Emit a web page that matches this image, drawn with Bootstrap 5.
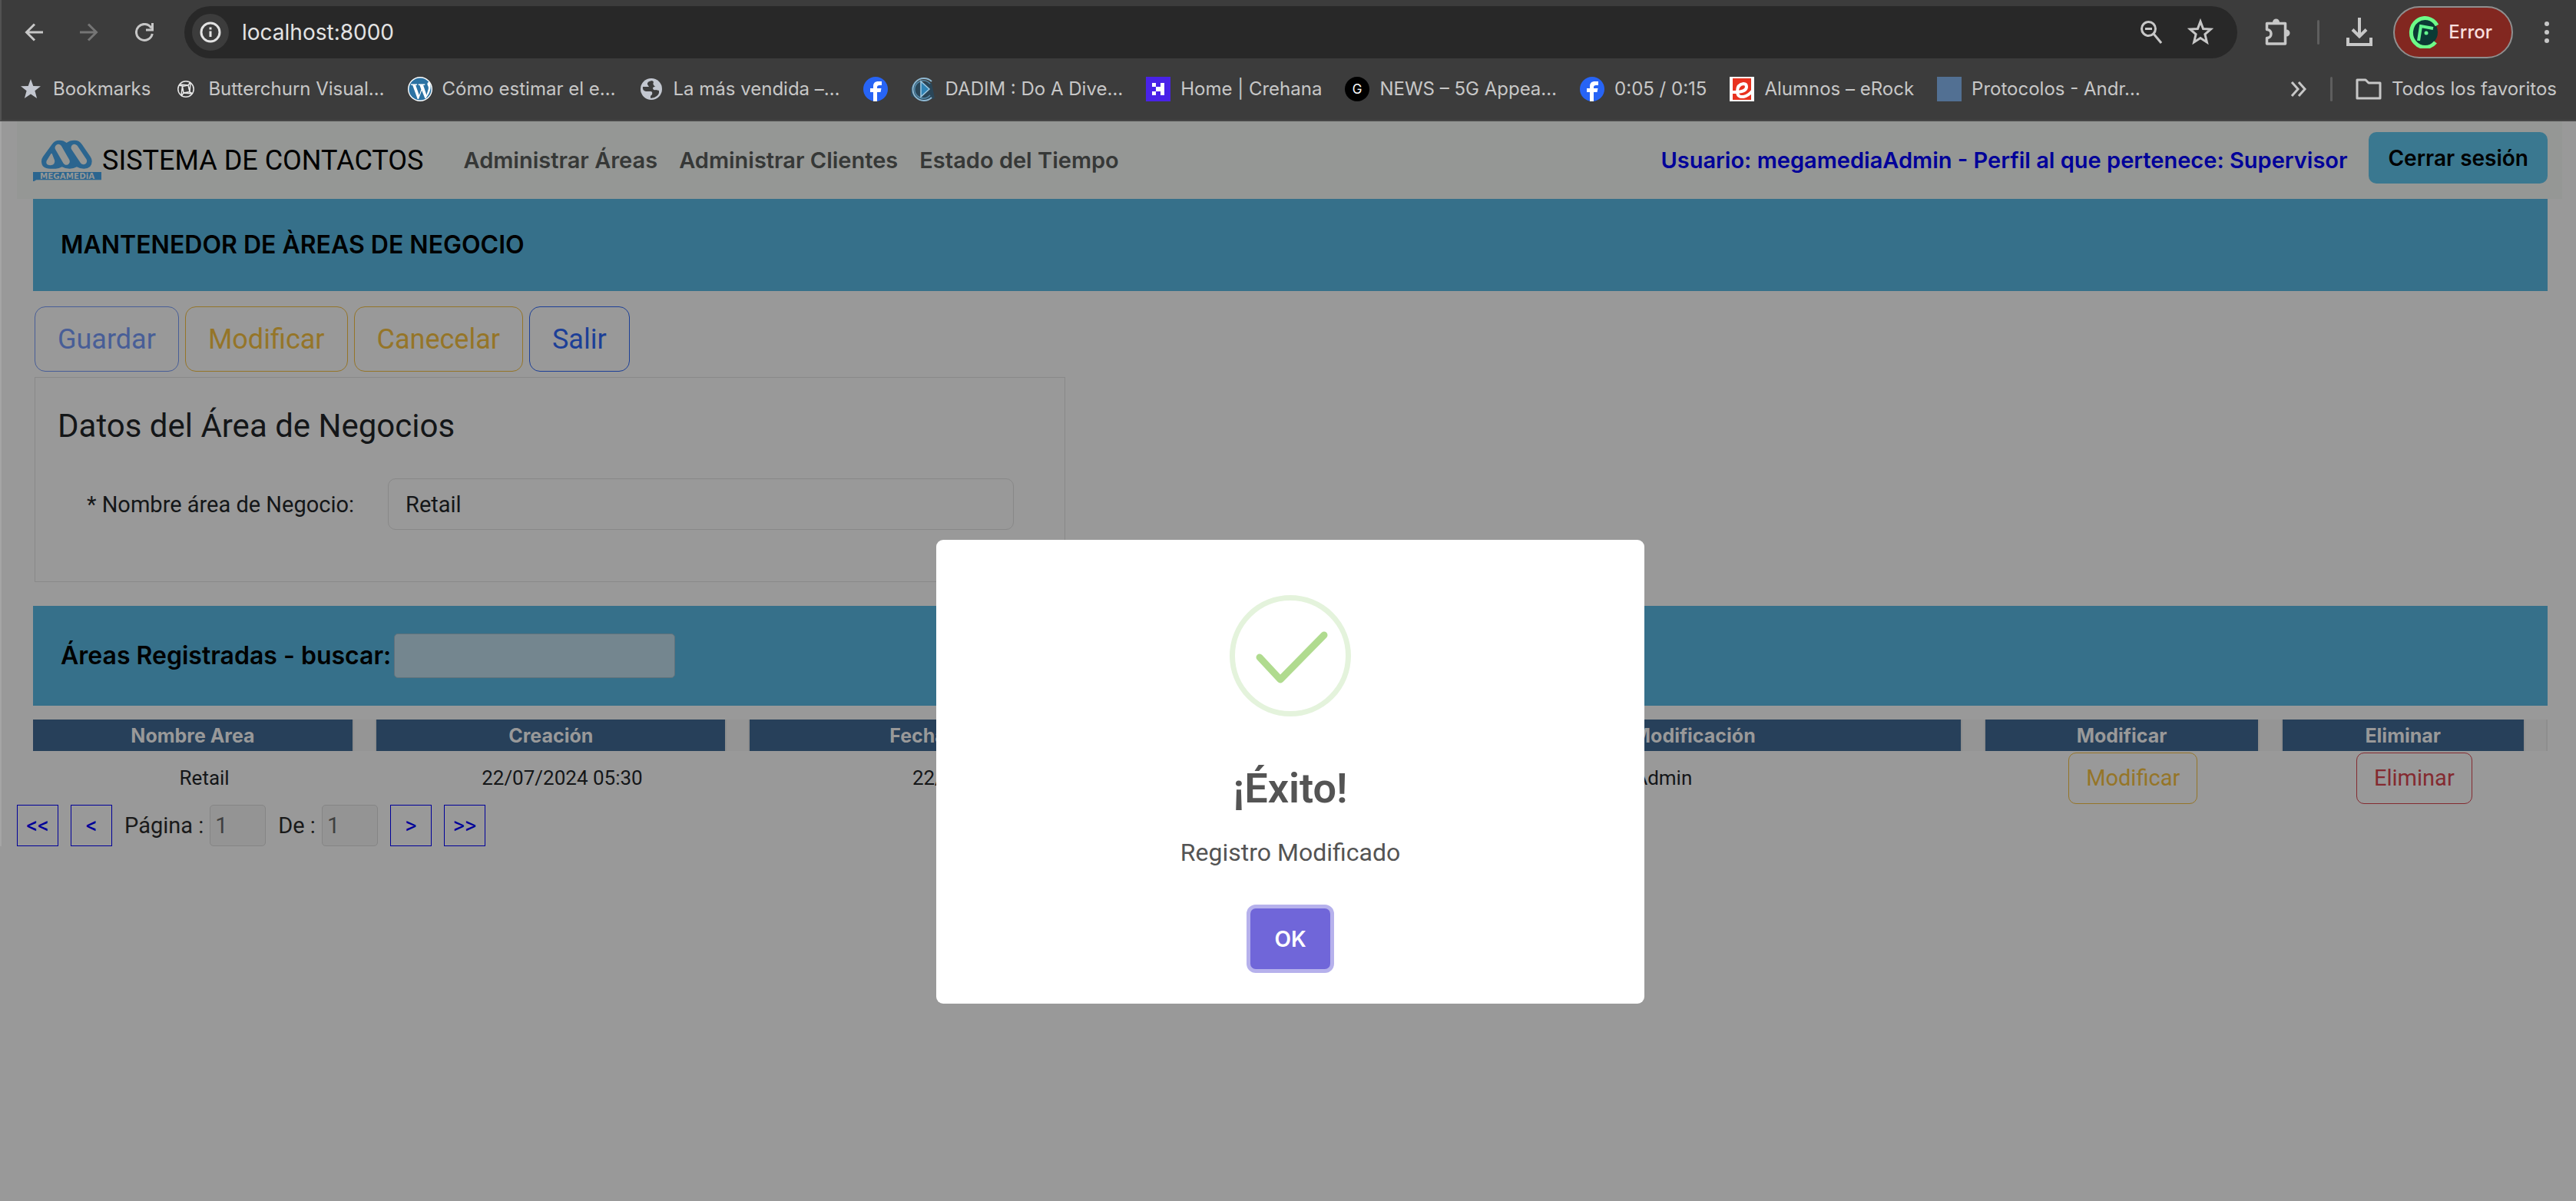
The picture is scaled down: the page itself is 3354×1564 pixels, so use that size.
<!DOCTYPE html>
<html lang="es">
<head>
<meta charset="utf-8">
<meta name="viewport" content="width=device-width, initial-scale=1">
<title>Sistema de Contactos</title>
<link href="https://cdn.jsdelivr.net/npm/bootstrap@5.3.0/dist/css/bootstrap.min.css" rel="stylesheet">
<style>
  html, body { height: 100%; }
  body { background: #999; color: #141618; font-family: Roboto, "Liberation Sans", sans-serif; font-size: 29px; line-height: 40px; }
  svg { flex: none; display: block; }

  /* browser chrome */
  .chrome-top { background: #3c3c3c; border-left: 2px solid #525252; border-bottom: 2px solid #474747; color: #c7c7c7; font-family: Inter, Roboto, sans-serif; font-size: 24px; line-height: 32px; }
  .tool-row { padding: 8px 2px 0 6px; height: 76px; }
  .tool-btn { width: 72px; height: 68px; padding: 0; border: 0; background: none; color: #c7c7c7; display: flex; align-items: center; justify-content: center; }
  .tool-btn.is-off { color: #757575; }
  .tool-btn.is-inner { width: 64px; }
  .address { background: #282828; border-radius: 34px; height: 68px; margin-left: 16px; padding: 0 16px 0 10px; }
  .site-info { width: 48px; height: 48px; border: 0; padding: 0; border-radius: 50%; background: #3c3c3c; color: #e3e3e3; display: flex; align-items: center; justify-content: center; }
  .address-text { background: none; border: 0; outline: 0; color: #e3e3e3; font-size: 28px; margin-left: 17px; padding: 0; }
  .vbar { width: 3px; height: 32px; border-radius: 2px; background: #5e5e5e; flex: none; }
  .profile { height: 68px; border-radius: 34px; border: 2px solid #8f8f8f; background: #822720; color: #f9dedc; font-weight: 500; padding: 0 25px 0 18px; gap: 12px; }
  .book-row { padding: 20px 25px 20px 22px; height: 80px; gap: 30px; }
  .book-row a { display: flex; align-items: center; gap: 13px; color: inherit; text-decoration: none; white-space: nowrap; }

  /* page */
  .page-area { border-left: 2px solid #a5a5a5; padding: 0 18px 0 20px; }
  .site-nav { background: #959795; height: 101px; padding: 0 19px 0 21px; font-family: Inter, Roboto, sans-serif; font-weight: 600; }
  .site-nav .navbar-brand { font: 400 36px/48px Roboto, sans-serif; color: #000; margin: 0 52px 0 0; padding: 0; gap: 1px; }
  .site-nav .nav-link { color: #363837; padding: 0; }
  .user-text { color: #000099; }
  .btn-logout { background: #3a7890; color: #000; font-size: 28px; font-weight: 600; border-radius: 10px; height: 67px; padding: 0 24px; margin: 0 0 6px 28px; }
  .main-area { padding: 0 19px 0 21px; }
  .banner { background: #36708a; color: #000; font: 600 32px/40px Inter, Roboto, sans-serif; padding: 0 36px; margin: 0; display: flex; align-items: center; }
  .banner-title { height: 120px; }
  .banner-search { height: 130px; margin-top: 31px; gap: 4px; }
  .banner-search input { width: 366px; height: 58px; border: 1px solid #60727c; border-radius: 5px; background: #74868f; padding: 0 12px; outline: 0; }

  .act-row { gap: 8px; margin: 20px 0 0 2px; }
  .btn-act { height: 85px; font-size: 36px; line-height: 48px; padding: 0 29px; border: 1px solid currentColor; border-radius: 14px; background: none; }
  .btn-act, .btn-row { color: var(--tone); --bs-btn-disabled-color: var(--tone); --bs-btn-disabled-border-color: var(--tone); --bs-btn-disabled-opacity: 1; }
  .btn-row { height: 67px; font-size: 29px; line-height: 40px; padding: 0 22px; border: 1px solid currentColor; border-radius: 10px; background: none; }
  .tone-soft { --tone: #485e97; }
  .tone-blue { --tone: #1c3f97; }
  .tone-gold { --tone: #957528; }
  .tone-red { --tone: #842a30; }

  .data-box { width: 41%; margin: 7px 0 0 2px; padding: 37px 66px 67px 29px; border: 1px solid #898989; }
  .data-box h2 { font-size: 42px; line-height: 52px; font-weight: 400; margin: 0; }
  .field-row { margin-top: 42px; padding-left: 38px; gap: 44px; }
  .field-row input { height: 67px; border: 1px solid #888; border-radius: 10px; background: none; color: inherit; padding: 0 22px; outline: 0; }

  .grid-areas { width: 100%; table-layout: fixed; margin-top: 18px; text-align: center; font-size: 26px; line-height: 34px; }
  .grid-areas th { background: #27405a; color: #999; height: 41px; padding: 0; font: 700 25px/34px Inter, Roboto, sans-serif; }
  .grid-areas th.gutter { background: #959595; border-left: 2px solid #8e8e8e; border-right: 2px solid #8e8e8e; }
  .grid-areas td { height: 70px; padding: 0; vertical-align: middle; }
  .c-gap { width: 29px; } .c-name { width: 12.74%; } .c-made { width: 13.93%; } .c-date { width: 18.54%; } .c-user { width: 28.83%; } .c-edit { width: 10.93%; } .c-drop { width: 9.65%; }

  .pager { color: #1a1a1a; gap: 16px; }
  .pager-btn { width: 54px; height: 54px; border: 1px solid #000099; background: none; color: #000099; padding: 0; }
  .pager label { display: flex; align-items: center; gap: 8px; }
  .pager input { width: 73px; height: 54px; border: 1px solid #858585; border-radius: 5px; background: #949494; color: #404040; padding: 0 6px; }

  /* alert over the page */
  .alert-layer { position: absolute; inset: 0; padding: 703px 0 0 6px; display: flex; justify-content: center; align-items: flex-start; }
  .alert-box { width: 922px; background: #fff; color: #545454; border-radius: 9px; padding: 72px 40px 45px; text-align: center; }
  .alert-box h1 { font-size: 54px; line-height: 70px; font-weight: 600; margin: 59px 0 0; }
  .alert-box p { font-size: 32px; line-height: 48px; margin: 24px 0 0; }
  .btn-ok, .btn-ok:hover { background: #7066d9; color: #fff; font: 600 28px/40px Inter, Roboto, sans-serif; width: 104px; height: 79px; border-radius: 7px; border: 0; margin-top: 49px; padding: 0; box-shadow: 0 0 0 5px #b6b1ec; }
</style>
</head>
<body class="position-relative overflow-hidden">

<header class="chrome-top">
  <div class="tool-row d-flex align-items-center">
    <button class="tool-btn" aria-label="Atrás"><svg width="24" height="24" viewBox="0 0 24 24" fill="none" stroke="currentColor" stroke-width="3"><path d="M24 12H2M13 1.500 2.500 12 13 22.500"/></svg></button>
    <button class="tool-btn is-off" aria-label="Adelante"><svg width="24" height="24" viewBox="0 0 24 24" fill="none" stroke="currentColor" stroke-width="3"><path d="M0 12h22M11 1.500 21.500 12 11 22.500"/></svg></button>
    <button class="tool-btn" aria-label="Recargar"><svg width="24" height="24" viewBox="0 0 24 24" fill="none" stroke="currentColor" stroke-width="3"><path d="M22.300 14A10.500 10.500 0 1 1 21 6.500M22.500 0v9h-8.500"/></svg></button>
    <div class="address d-flex align-items-center flex-grow-1">
      <button class="site-info" aria-label="Información del sitio"><svg width="28" height="28" viewBox="0 0 28 28" fill="none" stroke="currentColor" stroke-width="3"><circle cx="14" cy="14" r="12"/><path d="M14 12.500V20M14 7.500v3"/></svg></button>
      <input class="address-text flex-grow-1" aria-label="Dirección" value="localhost:8000">
      <button class="tool-btn is-inner" aria-label="Zoom"><svg width="28" height="32" viewBox="0 0 28 32" fill="none" stroke="currentColor" stroke-width="3"><circle cx="10.500" cy="11.500" r="9"/><path d="M6 11.500h9M17 18l10 12"/></svg></button>
      <button class="tool-btn is-inner" aria-label="Marcar"><svg width="34" height="36" viewBox="0 0 34 36" fill="none" stroke="currentColor" stroke-width="3"><path d="m17 4 3.600 9.500 9.900.6-7.600 6.500 2.500 10.400L17 25.500l-8.400 5.500 2.500-10.400L3.500 14.100l9.900-.6z"/></svg></button>
    </div>
    <button class="tool-btn mx-3" aria-label="Extensiones"><svg width="34" height="38" viewBox="0 0 34 38" fill="none" stroke="currentColor" stroke-width="3.500"><path d="M3.500 7.500h24V34h-24v-7.500a5.500 5.500 0 0 0 0-11z" stroke-linejoin="round"/><path d="M12 6a3.500 3.500 0 0 1 7 0zM29 16.500a3.500 3.500 0 0 1 0 7z" fill="currentColor" stroke-width="2"/></svg></button>
    <span class="vbar"></span>
    <button class="tool-btn ms-3" aria-label="Descargas"><svg width="34" height="38" viewBox="0 0 34 38" fill="none" stroke="currentColor" stroke-width="4"><path d="M17 0v24M8 15.500l9 9 9-9M2 26v9h30v-9"/></svg></button>
    <button class="profile d-flex align-items-center mx-2"><svg width="40" height="42" viewBox="0 0 40 42"><circle cx="20" cy="21" r="18" fill="#0b3a35"/><path d="M37 12A18 19 0 1 0 35 34" fill="none" stroke="#6dfb88" stroke-width="5"/><path d="M13 32 16 13l16 3" fill="none" stroke="#62f58e" stroke-width="4"/><circle cx="23" cy="22" r="2.500" fill="#62f58e"/></svg>Error</button>
    <button class="tool-btn" aria-label="Menú"><svg width="8" height="30" viewBox="0 0 8 30" fill="currentColor"><circle cx="4" cy="4" r="3"/><circle cx="4" cy="15" r="3"/><circle cx="4" cy="26" r="3"/></svg></button>
  </div>
  <nav class="book-row d-flex align-items-center" aria-label="Favoritos">
    <a href="#"><svg width="32" height="32" viewBox="0 0 32 32" fill="#c3c7d0"><path d="m16 3 3.300 9 9.700.3-7.600 6 2.700 9.700L16 22.400 7.900 28l2.700-9.700-7.600-6 9.700-.3z"/></svg>Bookmarks</a>
    <a href="#"><svg width="32" height="32" viewBox="0 0 32 32" fill="none" stroke="#e8e8e8" stroke-width="1.500"><circle cx="16" cy="16" r="10.200"/><path d="M11.500 12.500 19 11l2 8.500-8 1.500zM8 10l11 1 3-4M22 8l-1 12 4 2M24 22l-11-1-3 4M10 24l1.500-12L7 11"/></svg>Butterchurn Visual…</a>
    <a href="#"><svg width="32" height="32" viewBox="0 0 32 32"><circle cx="16" cy="16" r="16" fill="#fff"/><circle cx="16" cy="16" r="14.600" fill="#2b72a3"/><path d="M4 9.500h8v1.300l-1.800.3 4.600 13 2.600-7.600-2-5.400-1.700-.3V9.500h8.600v1.300l-2.200.3 4.300 12.700 2.300-7.800c1-3.500-1.700-4.800-1.200-7.300.4-1.800 2-2 3-1 2 4 1.500 8.500-1 14L23.500 28h-1.200l-4.100-10.200L14 29h-1.300L6.200 11.100 4 10.800z" fill="#fff"/></svg>Cómo estimar el e…</a>
    <a href="#"><svg width="32" height="32" viewBox="0 0 32 32"><circle cx="16" cy="16" r="14" fill="#c3c7d0"/><path d="M17 5q-7 1-6 5l2 3H5q-1 5 4 6h6q3 0 2 4l-2 2v3l5-1q7-3 6-9l-4-1q-4 1-4-3l4-2-1-4z" fill="#3c3c3c"/><path d="M20 4q-3 5 0 8l6 3 3-2Q26 6 20 4z" fill="#c3c7d0"/></svg>La más vendida –…</a>
    <a href="#" aria-label="Facebook"><svg width="32" height="32" viewBox="0 0 32 32"><circle cx="16" cy="16" r="16" fill="#2764f5"/><path d="M13 32V20H9v-5h4v-2.500C13 8 15.500 6 19.500 6H24v5h-3q-3 0-3 2.500V15h5.500l-1 5H18v12z" fill="#fff"/></svg></a>
    <a href="#"><svg width="32" height="32" viewBox="0 0 32 32" fill="none"><path d="M0 14 5 6l22 2 4 20-16 4L0 25z" fill="#2a4658"/><path d="M27 6A14.500 14.500 0 1 0 27 27" stroke="#8fb9d3" stroke-width="2"/><path d="M25 9A11.500 11.500 0 1 0 25 24" stroke="#5288a8" stroke-width="1.500"/><path d="M13 6v20l11-10z" fill="#2f83b5" stroke="#9cc8e2" stroke-width="1.500"/></svg>DADIM : Do A Dive…</a>
    <a href="#"><svg width="32" height="32" viewBox="0 0 32 32"><path fill="#4922e8" d="M0 0h32v32H0z"/><path d="M8 8h5v5H8zM8 19h5v5H8zM13 13h6V8h5v16h-5v-5h-6z" fill="#fff"/></svg>Home | Crehana</a>
    <a href="#"><svg width="32" height="32" viewBox="0 0 32 32"><circle cx="16" cy="16" r="16" fill="#000"/><text x="16" y="22" text-anchor="middle" font-family="Inter" font-size="17" fill="#fff">G</text></svg>NEWS – 5G Appea…</a>
    <a href="#"><svg width="32" height="32" viewBox="0 0 32 32"><circle cx="16" cy="16" r="16" fill="#2764f5"/><path d="M13 32V20H9v-5h4v-2.500C13 8 15.500 6 19.500 6H24v5h-3q-3 0-3 2.500V15h5.500l-1 5H18v12z" fill="#fff"/></svg>0:05 / 0:15</a>
    <a href="#"><svg width="32" height="32" viewBox="0 0 32 32"><path fill="#fff" d="M0 0h32v32H0z"/><path fill="#e8321f" d="M4 2h24v28H4z"/><path d="M2 20h8q12-1 12-7 0-4-4-4-8 1-8 10 0 8 8 7 6-1 12-8" fill="none" stroke="#fff" stroke-width="4"/></svg>Alumnos – eRock</a>
    <a href="#"><svg width="32" height="32" viewBox="0 0 32 32"><path fill="#527093" d="M0 0h32v32H0z"/></svg>Protocolos - Andr…</a>
    <a href="#" class="ms-auto" aria-label="Más favoritos"><svg width="22" height="20" viewBox="0 0 22 20" fill="none" stroke="currentColor" stroke-width="3"><path d="m2 1 8 9-8 9M11 1l8 9-8 9"/></svg></a>
    <span class="vbar"></span>
    <a href="#"><svg width="34" height="28" viewBox="0 0 34 28" fill="none" stroke="currentColor" stroke-width="3" stroke-linejoin="round"><path d="M2 2h11l4 4h15v20H2z"/></svg>Todos los favoritos</a>
  </nav>
</header>

<div class="page-area">
  <nav class="site-nav d-flex align-items-center">
    <a class="navbar-brand d-flex align-items-center" href="#">
      <svg width="89" height="54" viewBox="129 541 267 162" role="img" aria-label="Megamedia"><path d="M162 625q0-10 6-18l35-48q10-16 29-16 17 0 28 10 12-10 31-10 19 0 29 16l33 48q6 9 6 18 0 29-31 29-17 0-28-7-12 7-28 7-18 0-30-7-11 7-25 7-8 0-21 0-34 0-34-29z" fill="#2b658f"/><path d="M228 572l31 54M291 572l35 52" stroke="#959795" stroke-width="27" stroke-linecap="round"/><path d="M201 597l-17 28q-4 13 12 13 18 0 15-16z" fill="#959795" stroke="#959795" stroke-width="5" stroke-linejoin="round"/><path d="M129 667h267v31H142l-11 6h-2z" fill="#2b658f"/><text x="263" y="693" text-anchor="middle" font-family="DejaVu Sans" font-weight="700" font-size="31" fill="#959795">MEGAMEDiA</text></svg>
      SISTEMA DE CONTACTOS</a>
    <div class="d-flex gap-4 flex-grow-1">
      <a class="nav-link me-1" href="#">Administrar Áreas</a>
      <a class="nav-link me-1" href="#">Administrar Clientes</a>
      <a class="nav-link" href="#">Estado del Tiempo</a>
    </div>
    <span class="user-text">Usuario: megamediaAdmin - Perfil al que pertenece: Supervisor</span>
    <button class="btn btn-logout">Cerrar sesión</button>
  </nav>

  <main class="main-area">
    <h1 class="banner banner-title">MANTENEDOR DE ÀREAS DE NEGOCIO</h1>
    <div class="act-row d-flex">
      <button class="btn btn-act tone-soft" disabled>Guardar</button>
      <button class="btn btn-act tone-gold" disabled>Modificar</button>
      <button class="btn btn-act tone-gold" disabled>Canecelar</button>
      <button class="btn btn-act tone-blue">Salir</button>
    </div>

    <section class="data-box">
      <h2>Datos del Área de Negocios</h2>
      <div class="field-row d-flex align-items-center">
        <label for="nombre" class="text-nowrap">* Nombre área de Negocio:</label>
        <input id="nombre" class="flex-grow-1" value="Retail">
      </div>
    </section>

    <div class="banner banner-search">
      <label for="buscar">Áreas Registradas - buscar:</label>
      <input id="buscar" type="text">
    </div>

    <table class="grid-areas">
      <colgroup><col class="c-name"><col class="c-gap"><col class="c-made"><col class="c-gap"><col class="c-date"><col class="c-gap"><col class="c-user"><col class="c-gap"><col class="c-edit"><col class="c-gap"><col class="c-drop"><col class="c-gap"></colgroup>
      <thead><tr>
        <th>Nombre Area</th><th class="gutter"></th><th>Creación</th><th class="gutter"></th><th>Fecha Modificación</th><th class="gutter"></th><th>Usuario de la última Modificación</th><th class="gutter"></th><th>Modificar</th><th class="gutter"></th><th>Eliminar</th><th class="gutter"></th>
      </tr></thead>
      <tbody><tr>
        <td colspan="2">Retail</td><td colspan="2">22/07/2024 05:30</td><td colspan="2">22/07/2024 05:30</td><td colspan="2">megamediaAdmin</td>
        <td colspan="2"><button class="btn btn-row tone-gold">Modificar</button></td>
        <td colspan="2"><button class="btn btn-row tone-red">Eliminar</button></td>
      </tr></tbody>
    </table>
  </main>

  <div class="pager d-flex align-items-center">
    <button class="pager-btn">&lt;&lt;</button>
    <button class="pager-btn">&lt;</button>
    <label>Página : <input value="1" disabled></label>
    <label>De : <input value="1" disabled></label>
    <button class="pager-btn">&gt;</button>
    <button class="pager-btn">&gt;&gt;</button>
  </div>
</div>

<div class="alert-layer">
  <div class="alert-box" role="dialog" aria-labelledby="aviso">
    <svg class="mx-auto" width="158" height="158" viewBox="0 0 158 158" fill="none"><circle cx="79" cy="79" r="75.500" stroke="#e4f3dc" stroke-width="7"/><path d="M39 81l27 29 57-58" stroke="#b0db8f" stroke-width="9" stroke-linecap="round" stroke-linejoin="round"/></svg>
    <h1 id="aviso">¡Éxito!</h1>
    <p>Registro Modificado</p>
    <button class="btn btn-ok">OK</button>
  </div>
</div>

<script src="https://cdn.jsdelivr.net/npm/bootstrap@5.3.0/dist/js/bootstrap.bundle.min.js"></script>
</body>
</html>
